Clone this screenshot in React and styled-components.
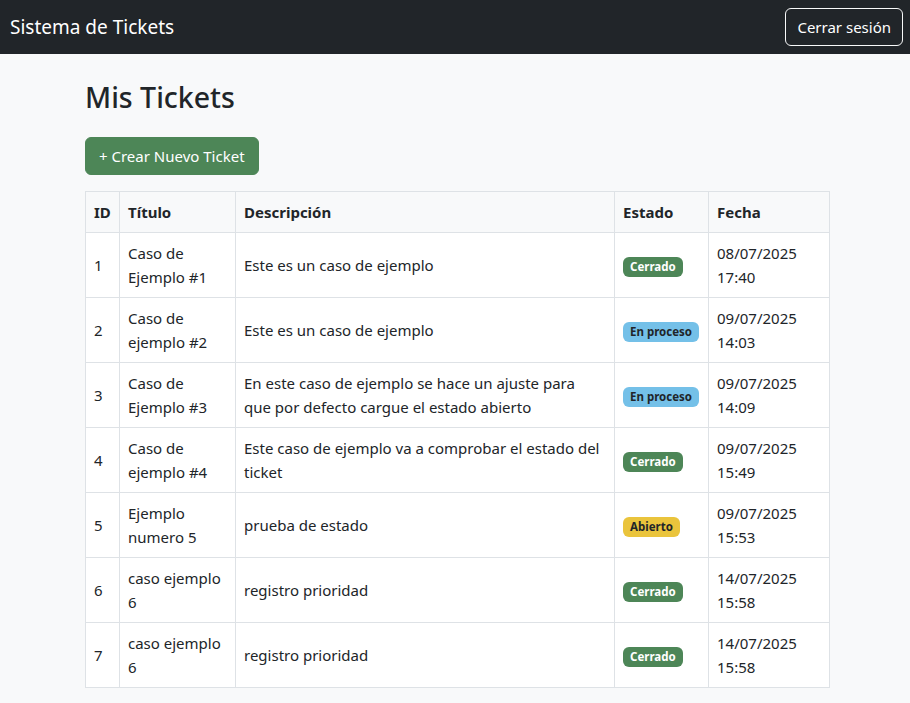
import React from 'react';
import styled, { createGlobalStyle } from 'styled-components';

const GlobalStyle = createGlobalStyle`
  * { box-sizing: border-box; }
  body {
    margin: 0;
    background: #f8f9fa;
    color: #212529;
    font-family: "Noto Sans", "Open Sans", sans-serif;
    font-size: 16px;
    line-height: 1.5;
  }
`;

const Navbar = styled.nav`
  height: 54px;
  background: #212529;
  display: flex;
  align-items: center;
  justify-content: space-between;
  padding: 0 7px 0 10px;
`;

const Brand = styled.span`
  color: #fff;
  font-size: 19px;
`;

const OutlineButton = styled.button`
  font-family: inherit;
  font-size: 15px;
  line-height: 24px;
  color: #fff;
  background: transparent;
  border: 1px solid #f8f9fa;
  border-radius: 6px;
  padding: 6px 11px;
  cursor: pointer;
`;

const Container = styled.main`
  max-width: 744px;
  margin: 24px auto 0;
  padding-left: 2px;
`;

const Title = styled.h2`
  font-size: 28.5px;
  font-weight: 500;
  line-height: 38px;
  margin: 0 0 21px;
`;

const PrimaryButton = styled.button`
  font-family: inherit;
  font-size: 15px;
  line-height: 24px;
  color: #fff;
  background: #4d8657;
  border: 1px solid #4d8657;
  border-radius: 6px;
  padding: 6px 13px;
  margin-bottom: 16px;
  cursor: pointer;
`;

const Table = styled.table`
  width: 744px;
  border-collapse: collapse;
  table-layout: fixed;
  font-size: 15px;
  line-height: 24px;
`;

const Th = styled.th`
  text-align: left;
  font-weight: 700;
  padding: 8px;
  background: #f8f9fa;
  border: 1px solid #dee2e6;
  vertical-align: middle;
  width: ${(p) => p.$w}px;
`;

const Td = styled.td`
  padding: 8px;
  padding-right: ${(p) => (p.$wide ? 9 : 8)}px;
  background: #fff;
  border: 1px solid #dee2e6;
  vertical-align: middle;
`;

const badgeColors = {
  Cerrado: { bg: '#4d8657', fg: '#fff' },
  'En proceso': { bg: '#74c0e8', fg: '#212529' },
  Abierto: { bg: '#eac43c', fg: '#212529' },
};

const Badge = styled.span`
  display: inline-block;
  font-size: 11.5px;
  font-weight: 700;
  line-height: 1;
  padding: 4px 7px 5px;
  border-radius: 6px;
  background: ${(p) => badgeColors[p.$status].bg};
  color: ${(p) => badgeColors[p.$status].fg};
`;

const tickets = [
  { id: 1, title: 'Caso de Ejemplo #1', desc: 'Este es un caso de ejemplo', status: 'Cerrado', date: '08/07/2025', time: '17:40' },
  { id: 2, title: 'Caso de ejemplo #2', desc: 'Este es un caso de ejemplo', status: 'En proceso', date: '09/07/2025', time: '14:03' },
  { id: 3, title: 'Caso de Ejemplo #3', desc: 'En este caso de ejemplo se hace un ajuste para que por defecto cargue el estado abierto', status: 'En proceso', date: '09/07/2025', time: '14:09' },
  { id: 4, title: 'Caso de ejemplo #4', desc: 'Este caso de ejemplo va a comprobar el estado del ticket', status: 'Cerrado', date: '09/07/2025', time: '15:49' },
  { id: 5, title: 'Ejemplo numero 5', desc: 'prueba de estado', status: 'Abierto', date: '09/07/2025', time: '15:53' },
  { id: 6, title: 'caso ejemplo 6', desc: 'registro prioridad', status: 'Cerrado', date: '14/07/2025', time: '15:58' },
  { id: 7, title: 'caso ejemplo 6', desc: 'registro prioridad', status: 'Cerrado', date: '14/07/2025', time: '15:58' },
];

export default function App() {
  return (
    <>
      <GlobalStyle />
      <Navbar>
        <Brand>Sistema de Tickets</Brand>
        <OutlineButton>Cerrar sesión</OutlineButton>
      </Navbar>
      <Container>
        <Title>Mis Tickets</Title>
        <PrimaryButton>+ Crear Nuevo Ticket</PrimaryButton>
        <Table>
          <thead>
            <tr>
              <Th $w={34}>ID</Th>
              <Th $w={116}>Título</Th>
              <Th $w={379}>Descripción</Th>
              <Th $w={94}>Estado</Th>
              <Th $w={121}>Fecha</Th>
            </tr>
          </thead>
          <tbody>
            {tickets.map((t) => (
              <tr key={t.id}>
                <Td>{t.id}</Td>
                <Td>{t.title}</Td>
                <Td $wide>{t.desc}</Td>
                <Td><Badge $status={t.status}>{t.status}</Badge></Td>
                <Td>{t.date} {t.time}</Td>
              </tr>
            ))}
          </tbody>
        </Table>
      </Container>
    </>
  );
}
